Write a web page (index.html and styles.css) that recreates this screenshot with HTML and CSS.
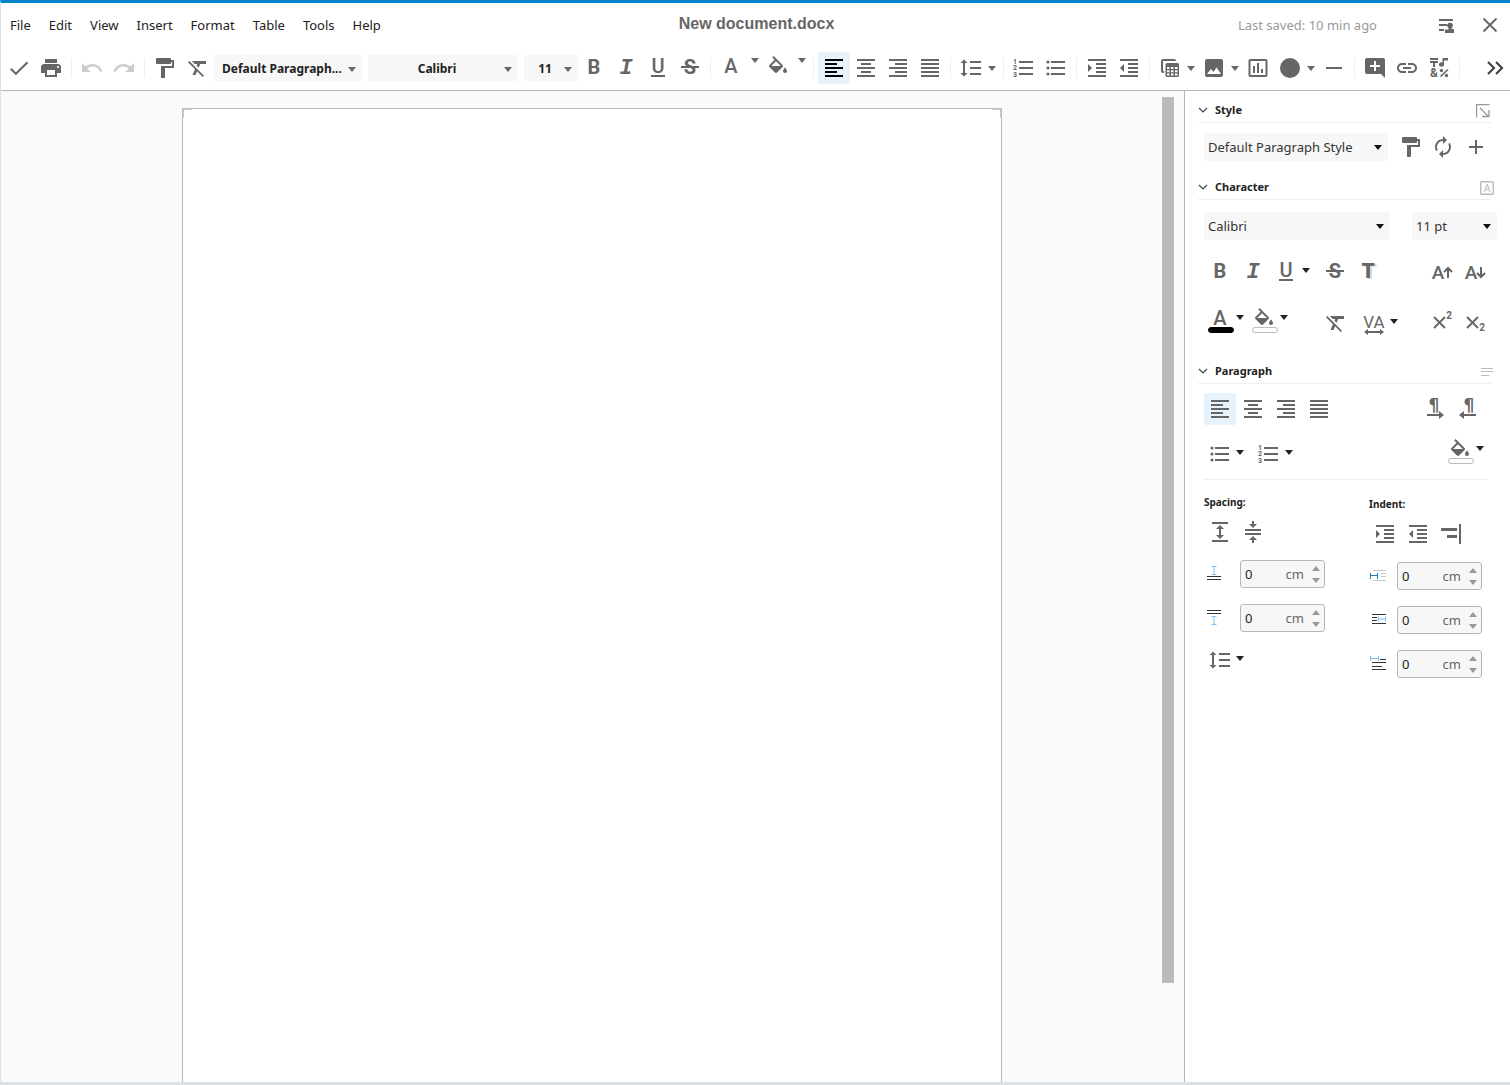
FILE: index.html
```html
<!DOCTYPE html>
<html lang="en">
<head>
    <meta charset="UTF-8">
    <meta name="viewport" content="width=device-width, initial-scale=1.0">
    <title>New document.docx</title>
    <link rel="stylesheet" href="styles.css">
</head>
<body>
    <!-- Icon sprite -->
    <svg class="sprite" aria-hidden="true">
        <symbol id="i-check" viewBox="0 0 24 24"><path d="M3.7 12.8l5.2 5L20.500 6.300" fill="none" stroke="currentColor" stroke-width="2"/></symbol>
        <symbol id="i-print" viewBox="0 0 24 24"><path d="M19 8H5c-1.66 0-3 1.34-3 3v6h4v4h12v-4h4v-6c0-1.66-1.34-3-3-3zm-3 11H8v-5h8v5zm3-7c-.55 0-1-.45-1-1s.45-1 1-1 1 .45 1 1-.45 1-1 1zm-1-9H6v4h12V3z"/></symbol>
        <symbol id="i-undo" viewBox="0 0 24 24"><path d="M12.500 8c-2.650 0-5.050.990-6.900 2.600L2 7v9h9l-3.620-3.620c1.390-1.160 3.160-1.880 5.120-1.880 3.540 0 6.550 2.310 7.600 5.500l2.370-.780C21.080 11.030 17.150 8 12.500 8z"/></symbol>
        <symbol id="i-redo" viewBox="0 0 24 24"><path d="M18.400 10.600C16.550 8.990 14.150 8 11.500 8c-4.650 0-8.580 3.030-9.960 7.220L3.900 16c1.050-3.190 4.050-5.500 7.600-5.500 1.950 0 3.730.720 5.120 1.880L13 16h9V7l-3.600 3.600z"/></symbol>
        <symbol id="i-paint" viewBox="0 0 24 24"><path d="M18 4V3c0-.55-.45-1-1-1H4c-.55 0-1 .45-1 1v4c0 .55.45 1 1 1h13c.55 0 1-.45 1-1V6h1v4H8v11c0 .55.45 1 1 1h2c.55 0 1-.45 1-1v-9h9V4h-3z"/></symbol>
        <symbol id="i-clear" viewBox="0 0 24 24"><path d="M4.270 5L3 6.270l6.970 6.970L7.500 19h3l1.570-3.660L17.730 21 19 19.730 4.550 5.270 4.270 5zM7 5v.180L9.820 8h2.400l-.720 1.680 2.100 2.100L15.210 8H21V5H7z"/></symbol>
        <symbol id="i-fill" viewBox="0 0 24 24"><path d="M16.560 8.940L7.620 0 6.210 1.410l2.380 2.380-5.150 5.150c-.590.590-.590 1.540 0 2.120l5.500 5.500c.290.290.680.440 1.060.440s.770-.150 1.060-.440l5.500-5.500c.590-.580.590-1.530 0-2.120zM5.210 10L10 5.210 14.790 10H5.210zM19 11.500s-2 2.170-2 3.500c0 1.100.900 2 2 2s2-.900 2-2c0-1.330-2-3.500-2-3.500z"/></symbol>
        <symbol id="i-left" viewBox="0 0 24 24"><path d="M3 3h18v2H3zM3 7h12v2H3zM3 11h18v2H3zM3 15h12v2H3zM3 19h18v2H3z"/></symbol>
        <symbol id="i-center" viewBox="0 0 24 24"><path d="M3 3h18v2H3zM7 7h10v2H7zM3 11h18v2H3zM7 15h10v2H7zM3 19h18v2H3z"/></symbol>
        <symbol id="i-right" viewBox="0 0 24 24"><path d="M3 3h18v2H3zM9 7h12v2H9zM3 11h18v2H3zM9 15h12v2H9zM3 19h18v2H3z"/></symbol>
        <symbol id="i-justify" viewBox="0 0 24 24"><path d="M3 3h18v2H3zM3 7h18v2H3zM3 11h18v2H3zM3 15h18v2H3zM3 19h18v2H3z"/></symbol>
        <symbol id="i-lines" viewBox="0 0 24 24"><path d="M6 7h2.500L5 3.500 1.500 7H4v10H1.500L5 20.500 8.500 17H6V7zm5-2v2h11V5H11zm0 14h11v-2H11v2zm0-6h11v-2H11v2z"/></symbol>
        <symbol id="i-ul" viewBox="0 0 24 24"><path d="M7 5h14v2H7zM7 11h14v2H7zM7 17h14v2H7z"/><circle cx="4" cy="6" r="1.600"/><circle cx="4" cy="12" r="1.600"/><circle cx="4" cy="18" r="1.600"/></symbol>
        <symbol id="i-indent" viewBox="0 0 24 24"><path d="M3 21h18v-2H3v2zM3 8v8l4-4-4-4zm8 9h10v-2H11v2zM3 3v2h18V3H3zm8 6h10V7H11v2zm0 4h10v-2H11v2z"/></symbol>
        <symbol id="i-outdent" viewBox="0 0 24 24"><path d="M11 17h10v-2H11v2zm-8-5l4 4V8l-4 4zm0 9h18v-2H3v2zM3 3v2h18V3H3zm8 6h10V7H11v2zm0 4h10v-2H11v2z"/></symbol>
        <symbol id="i-table" viewBox="0 0 24 24"><path d="M17 5V4.500Q17 4 16 4H5Q4 4 4 5v10q0 1 1 1h1" fill="none" stroke="currentColor" stroke-width="2"/><path fill-rule="evenodd" d="M9 7h10.500a1.500 1.500 0 0 1 1.500 1.500v11a1.500 1.500 0 0 1-1.500 1.500H9a1.500 1.500 0 0 1-1.500-1.500v-11A1.500 1.500 0 0 1 9 7zM9 11v2h2.500v-2zm4 0v2h2.500v-2zm4 0v2h2.500v-2zM9 14.200v2h2.500v-2zm4 0v2h2.500v-2zm4 0v2h2.500v-2zM9 17.500v2h2.500v-2zm4 0v2h2.500v-2zm4 0v2h2.500v-2z"/></symbol>
        <symbol id="i-image" viewBox="0 0 24 24"><path fill-rule="evenodd" d="M5 3h14a2 2 0 0 1 2 2v14a2 2 0 0 1-2 2H5a2 2 0 0 1-2-2V5a2 2 0 0 1 2-2zM5 18h14l-4.500-6.500-3 4.500-2.500-3z"/></symbol>
        <symbol id="i-chart" viewBox="0 0 24 24"><path d="M9 17H7v-7h2v7zm4 0h-2V7h2v10zm4 0h-2v-4h2v4zm2.500 2.100h-15V5h15v14.100zm0-16.100h-15c-1.100 0-2 .900-2 2v14c0 1.100.900 2 2 2h15c1.100 0 2-.900 2-2V5c0-1.100-.900-2-2-2z"/></symbol>
        <symbol id="i-circle" viewBox="0 0 24 24"><circle cx="12" cy="12" r="10"/></symbol>
        <symbol id="i-line" viewBox="0 0 24 24"><path d="M4 11h16v2H4z"/></symbol>
        <symbol id="i-comment" viewBox="0 0 24 24"><path d="M22 4c0-1.100-.900-2-2-2H4c-1.100 0-2 .900-2 2v12c0 1.100.900 2 2 2h14l4 4V4zm-5 7h-4v4h-2v-4H7V9h4V5h2v4h4v2z"/></symbol>
        <symbol id="i-link" viewBox="0 0 24 24"><path d="M3.900 12c0-1.710 1.390-3.100 3.100-3.100h4V7H7c-2.760 0-5 2.240-5 5s2.240 5 5 5h4v-1.900H7c-1.710 0-3.100-1.390-3.100-3.100zM8 13h8v-2H8v2zm9-6h-4v1.900h4c1.710 0 3.100 1.390 3.100 3.100s-1.390 3.100-3.100 3.100h-4V17h4c2.760 0 5-2.240 5-5s-2.240-5-5-5z"/></symbol>
        <symbol id="i-more" viewBox="0 0 24 24"><path d="M6 6l6 6-6 6M14 6l6 6-6 6" fill="none" stroke="currentColor" stroke-width="2.200"/></symbol>
        <symbol id="i-close" viewBox="0 0 24 24"><path d="M5.500 5.500l13 13M18.500 5.500l-13 13" stroke="currentColor" stroke-width="1.800"/></symbol>
        <symbol id="i-view" viewBox="0 0 24 24"><path d="M5 6h14v2H5zM5 11h8v2H5zM5 16h5v2H5z"/><circle cx="16" cy="12.500" r="2.800"/><path d="M14.500 13h3v3h2.500v4h-9v-3.500h3.500z"/></symbol>
        <symbol id="i-caret" viewBox="0 0 8 5"><path d="M0 0h8L4 5z"/></symbol>
        <symbol id="i-chevron" viewBox="0 0 10 6"><path d="M1 1l4 4 4-4" fill="none" stroke="currentColor" stroke-width="1.200"/></symbol>
        <symbol id="i-dialog" viewBox="0 0 14 14"><path d="M.500 13.500V.500h13M4 4l8 8M6 12.500h7V6" fill="none" stroke="currentColor" stroke-width="1.300"/></symbol>
        <symbol id="i-para" viewBox="0 0 14 14"><path d="M1 3h12v1H1zM1 6h12v1H1zM1 10h8v1H1z"/></symbol>
        <symbol id="i-sync" viewBox="0 0 24 24"><path d="M12 6v3l4-4-4-4v3c-4.420 0-8 3.580-8 8 0 1.570.460 3.030 1.240 4.260L6.700 14.800c-.450-.830-.700-1.790-.700-2.800 0-3.310 2.690-6 6-6zm6.760 1.740L17.300 9.200c.440.840.700 1.790.700 2.800 0 3.310-2.690 6-6 6v-3l-4 4 4 4v-3c4.420 0 8-3.580 8-8 0-1.570-.460-3.030-1.240-4.260z"/></symbol>
        <symbol id="i-plus" viewBox="0 0 24 24"><path d="M12 5h2v6h6v2h-6v6h-2v-6H6v-2h6z"/></symbol>
        <symbol id="i-increase" viewBox="0 0 24 24"><path d="M4 2h16v2H4zM4 20h16v2H4zM11 8h2v8h-2z"/><path d="M12 5l4 4H8zM12 19l-4-4h8z"/></symbol>
        <symbol id="i-decrease" viewBox="0 0 24 24"><path d="M4 9h16v2H4zM4 13h16v2H4zM11 1h2v3h-2zM11 20h2v3h-2z"/><path d="M12 8L8 4h8zM12 16l4 4H8z"/></symbol>
        <symbol id="i-hanging" viewBox="0 0 24 24"><path d="M2 6h16v3H2zM8 13h10v3H8zM20 2h2v20h-2z"/></symbol>
        <symbol id="i-above" viewBox="0 0 16 16"><path class="ink" d="M1 10.500h14M1 13.500h14"/><path class="blue" d="M5.500 .500h5M5.500 8.500h5M8 1v8"/></symbol>
        <symbol id="i-below" viewBox="0 0 16 16"><path class="ink" d="M1 .500h14M1 3.500h14"/><path class="blue" d="M5.500 6.500h5M5.500 14.500h5M8 7v8"/></symbol>
        <symbol id="i-before" viewBox="0 0 16 16"><path class="pale" d="M3 2.500h13M11 5.500h5M11 8.500h5M3 12.500h13"/><path class="deep" d="M.500 5v6M7.500 5v6M.500 7.500h7"/></symbol>
        <symbol id="i-after" viewBox="0 0 16 16"><path class="ink" d="M2 2.500h14M2 5.500h5M2 8.500h5M2 11.500h14"/><path class="blue" d="M8.500 4.500v5M15.500 4.500v5M8 7h8"/></symbol>
        <symbol id="i-first" viewBox="0 0 16 16"><path class="ink" d="M10 3.500h6M2 6.500h14M2 10.500h10M2 13.500h14"/><path class="blue" d="M.500 0v5M8.500 0v5M.500 2.500H8"/></symbol>
    </svg>

    <header class="top">
        <div class="menubar">
            <nav class="menu">
                <a href="#">File</a>
                <a href="#">Edit</a>
                <a href="#">View</a>
                <a href="#">Insert</a>
                <a href="#">Format</a>
                <a href="#">Table</a>
                <a href="#">Tools</a>
                <a href="#">Help</a>
            </nav>
            <h1 class="title">New document.docx</h1>
            <div class="status">
                <span class="saved">Last saved: 10 min ago</span>
                <button class="btn" aria-label="Toggle sidebar"><svg><use href="#i-view"/></svg></button>
                <button class="btn" aria-label="Close"><svg><use href="#i-close"/></svg></button>
            </div>
        </div>

        <div class="toolbar">
            <button class="btn" aria-label="Save"><svg><use href="#i-check"/></svg></button>
            <button class="btn" aria-label="Print"><svg><use href="#i-print"/></svg></button>
            <span class="sep"></span>
            <button class="btn" aria-label="Undo" disabled><svg><use href="#i-undo"/></svg></button>
            <button class="btn" aria-label="Redo" disabled><svg><use href="#i-redo"/></svg></button>
            <span class="sep"></span>
            <button class="btn" aria-label="Clone formatting"><svg><use href="#i-paint"/></svg></button>
            <button class="btn" aria-label="Clear formatting"><svg><use href="#i-clear"/></svg></button>
            <div class="combos">
                <div class="combo combo-style"><select aria-label="Paragraph style"><option>Default Paragraph...</option></select></div>
                <div class="combo combo-font"><select aria-label="Font name"><option>Calibri</option></select></div>
                <div class="combo combo-size"><select aria-label="Font size"><option>11</option></select></div>
            </div>
            <button class="btn" aria-label="Bold"><svg viewBox="0 0 24 24"><text x="12" y="18" class="g-bold">B</text></svg></button>
            <button class="btn" aria-label="Italic"><svg viewBox="0 0 24 24"><text x="12" y="18" class="g-italic">I</text></svg></button>
            <button class="btn" aria-label="Underline"><svg viewBox="0 0 24 24"><text x="12" y="17" class="g-medium">U</text><path d="M5 19h14v2H5z"/></svg></button>
            <button class="btn" aria-label="Strikethrough"><svg viewBox="0 0 24 24"><text x="12" y="18" class="g-bold">S</text><path d="M3 10h18v2H3z"/></svg></button>
            <span class="sep"></span>
            <button class="btn" aria-label="Font color"><svg viewBox="0 0 24 24"><text x="12" y="17" class="g-medium">A</text></svg></button>
            <button class="drop drop-high" aria-label="Font color options"><svg><use href="#i-caret"/></svg></button>
            <button class="btn" aria-label="Highlighting"><svg><use href="#i-fill"/></svg></button>
            <button class="drop drop-high" aria-label="Highlighting options"><svg><use href="#i-caret"/></svg></button>
            <span class="sep"></span>
            <button class="btn active" aria-label="Align left"><svg><use href="#i-left"/></svg></button>
            <button class="btn" aria-label="Align center"><svg><use href="#i-center"/></svg></button>
            <button class="btn" aria-label="Align right"><svg><use href="#i-right"/></svg></button>
            <button class="btn" aria-label="Justified"><svg><use href="#i-justify"/></svg></button>
            <span class="sep"></span>
            <button class="btn" aria-label="Line spacing"><svg><use href="#i-lines"/></svg></button>
            <button class="drop" aria-label="Line spacing options"><svg><use href="#i-caret"/></svg></button>
            <span class="sep"></span>
            <button class="btn" aria-label="Numbered list"><svg viewBox="0 0 24 24"><path d="M7 5h14v2H7zM7 11h14v2H7zM7 17h14v2H7z"/><text x="3" y="8" class="g-num">1</text><text x="3" y="14" class="g-num">2</text><text x="3" y="21" class="g-num">3</text></svg></button>
            <button class="btn" aria-label="Bulleted list"><svg><use href="#i-ul"/></svg></button>
            <span class="sep"></span>
            <button class="btn" aria-label="Increase indent"><svg><use href="#i-indent"/></svg></button>
            <button class="btn" aria-label="Decrease indent"><svg><use href="#i-outdent"/></svg></button>
            <span class="sep"></span>
            <button class="btn" aria-label="Insert table"><svg><use href="#i-table"/></svg></button>
            <button class="drop" aria-label="Table options"><svg><use href="#i-caret"/></svg></button>
            <button class="btn" aria-label="Insert image"><svg><use href="#i-image"/></svg></button>
            <button class="drop" aria-label="Image options"><svg><use href="#i-caret"/></svg></button>
            <button class="btn" aria-label="Insert chart"><svg><use href="#i-chart"/></svg></button>
            <button class="btn" aria-label="Insert shape"><svg><use href="#i-circle"/></svg></button>
            <button class="drop" aria-label="Shape options"><svg><use href="#i-caret"/></svg></button>
            <button class="btn" aria-label="Insert line"><svg><use href="#i-line"/></svg></button>
            <span class="sep"></span>
            <button class="btn" aria-label="Insert comment"><svg><use href="#i-comment"/></svg></button>
            <button class="btn" aria-label="Insert link"><svg><use href="#i-link"/></svg></button>
            <button class="btn" aria-label="Special character"><svg viewBox="0 0 24 24"><path d="M3 2h8v2H3zM3 5h8v2H8v4H6V7H3z"/><ellipse cx="14.5" cy="8.5" rx="2.6" ry="2.2"/><path d="M15.5 2H21v2.500h-4v4h-1.500z"/><text x="7" y="21" class="g-amp">&amp;</text><path d="M13.5 20.500l7.500-7" stroke="currentColor" stroke-width="1.7"/><circle cx="14.5" cy="14.5" r="1.7"/><circle cx="19.5" cy="19.5" r="1.7"/></svg></button>
            <span class="sep"></span>
            <button class="btn more" aria-label="More tools"><svg><use href="#i-more"/></svg></button>
        </div>
    </header>

    <div class="workspace">
        <main class="canvas">
            <div class="page"></div>
            <div class="scrollbar"></div>
        </main>

        <aside class="sidebar">
            <section class="panel">
                <header class="panel-head">
                    <svg class="chevron"><use href="#i-chevron"/></svg>
                    <h2>Style</h2>
                    <button class="head-btn dialog-btn" aria-label="Style options"><svg><use href="#i-dialog"/></svg></button>
                </header>
                <div class="row row-style">
                    <div class="field field-wide"><select aria-label="Paragraph style"><option>Default Paragraph Style</option></select></div>
                    <button class="btn" aria-label="Clone formatting"><svg><use href="#i-paint"/></svg></button>
                    <button class="btn" aria-label="Update style"><svg><use href="#i-sync"/></svg></button>
                    <button class="btn" aria-label="New style"><svg><use href="#i-plus"/></svg></button>
                </div>
            </section>

            <section class="panel">
                <header class="panel-head">
                    <svg class="chevron"><use href="#i-chevron"/></svg>
                    <h2>Character</h2>
                    <button class="head-btn" aria-label="Character options"><svg viewBox="0 0 14 14"><rect x=".7" y=".7" width="12.6" height="12.6" rx="1" fill="none" stroke="currentColor" stroke-width="1.4"/><text x="7" y="11" class="g-small">A</text></svg></button>
                </header>
                <div class="row row-fonts">
                    <div class="field field-wide"><select aria-label="Font name"><option>Calibri</option></select></div>
                    <div class="field field-size"><select aria-label="Font size"><option>11 pt</option></select></div>
                </div>
                <div class="row row-char">
                    <div class="group group-left">
                        <button class="btn" aria-label="Bold"><svg viewBox="0 0 24 24"><text x="12" y="18" class="g-bold">B</text></svg></button>
                        <button class="btn" aria-label="Italic"><svg viewBox="0 0 24 24"><text x="12" y="18" class="g-italic">I</text></svg></button>
                        <div class="split">
                            <button class="btn" aria-label="Underline"><svg viewBox="0 0 24 24"><text x="12" y="17" class="g-medium">U</text><path d="M5 19h14v2H5z"/></svg></button>
                            <button class="drop" aria-label="Underline options"><svg><use href="#i-caret"/></svg></button>
                        </div>
                    </div>
                    <div class="group">
                        <button class="btn" aria-label="Strikethrough"><svg viewBox="0 0 24 24"><text x="12" y="18" class="g-bold">S</text><path d="M3 10h18v2H3z"/></svg></button>
                        <button class="btn" aria-label="Shadow"><svg viewBox="0 0 24 24"><text x="12" y="18" class="g-shadow">T</text></svg></button>
                    </div>
                    <div class="group group-end">
                        <button class="btn" aria-label="Increase size"><svg viewBox="0 0 24 24"><text x="8" y="19" class="g-size">A</text><path d="M18 18V8M14 12l4-4 4 4" fill="none" stroke="currentColor" stroke-width="2"/></svg></button>
                        <button class="btn" aria-label="Decrease size"><svg viewBox="0 0 24 24"><text x="8" y="19" class="g-size">A</text><path d="M18 7v10M14 13l4 4 4-4" fill="none" stroke="currentColor" stroke-width="2"/></svg></button>
                    </div>
                </div>
                <div class="row row-color">
                    <div class="group group-left group-color">
                        <div class="split split-high">
                            <button class="btn swatch swatch-black" aria-label="Font color"><svg viewBox="0 0 24 24"><text x="12" y="17" class="g-medium">A</text></svg></button>
                            <button class="drop" aria-label="Font color options"><svg><use href="#i-caret"/></svg></button>
                        </div>
                        <div class="split split-high">
                            <button class="btn swatch" aria-label="Highlighting"><svg><use href="#i-fill"/></svg></button>
                            <button class="drop" aria-label="Highlighting options"><svg><use href="#i-caret"/></svg></button>
                        </div>
                    </div>
                    <div class="group group-wide">
                        <button class="btn" aria-label="Clear formatting"><svg><use href="#i-clear"/></svg></button>
                        <div class="split">
                            <button class="btn" aria-label="Character spacing"><svg viewBox="0 0 24 24"><text x="12" y="17" class="g-kern">VA</text><path d="M5 20h14v2H5z"/><path d="M2 21l4-3v6zM22 21l-4-3v6z"/></svg></button>
                            <button class="drop" aria-label="Character spacing options"><svg><use href="#i-caret"/></svg></button>
                        </div>
                    </div>
                    <div class="group group-end">
                        <button class="btn" aria-label="Superscript"><svg viewBox="0 0 24 24"><path d="M4 6l11 11M15 6L4 17" stroke="currentColor" stroke-width="1.9"/><text x="19" y="8" class="g-exp">2</text></svg></button>
                        <button class="btn" aria-label="Subscript"><svg viewBox="0 0 24 24"><path d="M4 6l11 11M15 6L4 17" stroke="currentColor" stroke-width="1.9"/><text x="19" y="20" class="g-exp">2</text></svg></button>
                    </div>
                </div>
            </section>

            <section class="panel">
                <header class="panel-head">
                    <svg class="chevron"><use href="#i-chevron"/></svg>
                    <h2>Paragraph</h2>
                    <button class="head-btn" aria-label="Paragraph options"><svg><use href="#i-para"/></svg></button>
                </header>
                <div class="row row-align">
                    <div class="group">
                        <button class="btn active" aria-label="Align left"><svg><use href="#i-left"/></svg></button>
                        <button class="btn" aria-label="Align center"><svg><use href="#i-center"/></svg></button>
                        <button class="btn" aria-label="Align right"><svg><use href="#i-right"/></svg></button>
                        <button class="btn" aria-label="Justified"><svg><use href="#i-justify"/></svg></button>
                    </div>
                    <div class="group group-end">
                        <button class="btn" aria-label="Left to right"><svg viewBox="0 0 24 24"><text x="11" y="14" class="g-pilcrow">¶</text><path d="M4 17h12v-3l5 4-5 4v-3H4z"/></svg></button>
                        <button class="btn" aria-label="Right to left"><svg viewBox="0 0 24 24"><text x="13" y="14" class="g-pilcrow">¶</text><path d="M20 17H8v-3l-5 4 5 4v-3h12z"/></svg></button>
                    </div>
                </div>
                <div class="row row-list">
                    <div class="group group-list">
                        <div class="split">
                            <button class="btn" aria-label="Bulleted list"><svg><use href="#i-ul"/></svg></button>
                            <button class="drop" aria-label="Bullet options"><svg><use href="#i-caret"/></svg></button>
                        </div>
                        <div class="split">
                            <button class="btn" aria-label="Numbered list"><svg viewBox="0 0 24 24"><path d="M7 5h14v2H7zM7 11h14v2H7zM7 17h14v2H7z"/><text x="3" y="8" class="g-num">1</text><text x="3" y="14" class="g-num">2</text><text x="3" y="21" class="g-num">3</text></svg></button>
                            <button class="drop" aria-label="Numbering options"><svg><use href="#i-caret"/></svg></button>
                        </div>
                    </div>
                    <div class="split split-high group-end">
                        <button class="btn swatch" aria-label="Background color"><svg><use href="#i-fill"/></svg></button>
                        <button class="drop" aria-label="Background color options"><svg><use href="#i-caret"/></svg></button>
                    </div>
                </div>

                <div class="columns">
                    <div class="column">
                        <h3>Spacing:</h3>
                        <div class="group">
                            <button class="btn" aria-label="Increase spacing"><svg><use href="#i-increase"/></svg></button>
                            <button class="btn" aria-label="Decrease spacing"><svg><use href="#i-decrease"/></svg></button>
                        </div>
                        <div class="measure">
                            <label for="above" aria-label="Above paragraph"><svg><use href="#i-above"/></svg></label>
                            <div class="spin"><input type="text" id="above" value="0"><span>cm</span><div class="arrows"><button aria-label="Up"><svg><use href="#i-caret"/></svg></button><button aria-label="Down"><svg><use href="#i-caret"/></svg></button></div></div>
                        </div>
                        <div class="measure">
                            <label for="below" aria-label="Below paragraph"><svg><use href="#i-below"/></svg></label>
                            <div class="spin"><input type="text" id="below" value="0"><span>cm</span><div class="arrows"><button aria-label="Up"><svg><use href="#i-caret"/></svg></button><button aria-label="Down"><svg><use href="#i-caret"/></svg></button></div></div>
                        </div>
                        <div class="split line-spacing">
                            <button class="btn" aria-label="Line spacing"><svg><use href="#i-lines"/></svg></button>
                            <button class="drop" aria-label="Line spacing options"><svg><use href="#i-caret"/></svg></button>
                        </div>
                    </div>
                    <div class="column column-indent">
                        <h3>Indent:</h3>
                        <div class="group">
                            <button class="btn" aria-label="Increase indent"><svg><use href="#i-indent"/></svg></button>
                            <button class="btn" aria-label="Decrease indent"><svg><use href="#i-outdent"/></svg></button>
                            <button class="btn" aria-label="Hanging indent"><svg><use href="#i-hanging"/></svg></button>
                        </div>
                        <div class="measure">
                            <label for="before" aria-label="Before text"><svg><use href="#i-before"/></svg></label>
                            <div class="spin"><input type="text" id="before" value="0"><span>cm</span><div class="arrows"><button aria-label="Up"><svg><use href="#i-caret"/></svg></button><button aria-label="Down"><svg><use href="#i-caret"/></svg></button></div></div>
                        </div>
                        <div class="measure">
                            <label for="after" aria-label="After text"><svg><use href="#i-after"/></svg></label>
                            <div class="spin"><input type="text" id="after" value="0"><span>cm</span><div class="arrows"><button aria-label="Up"><svg><use href="#i-caret"/></svg></button><button aria-label="Down"><svg><use href="#i-caret"/></svg></button></div></div>
                        </div>
                        <div class="measure">
                            <label for="first" aria-label="First line"><svg><use href="#i-first"/></svg></label>
                            <div class="spin"><input type="text" id="first" value="0"><span>cm</span><div class="arrows"><button aria-label="Up"><svg><use href="#i-caret"/></svg></button><button aria-label="Down"><svg><use href="#i-caret"/></svg></button></div></div>
                        </div>
                    </div>
                </div>
            </section>
        </aside>
    </div>
</body>
</html>
```
FILE: styles.css
```css
*,
*::before,
*::after {
    box-sizing: border-box;
}

body {
    display: flex;
    flex-direction: column;
    min-height: 100vh;
    margin: 0;
    border-top: 3px solid #0082c9;
    border-bottom: 3px solid #dde1e6;
    border-left: 1px solid #dde1e6;
    background-color: #fff;
    color: #222;
    font-family: "Noto Sans", sans-serif;
    font-size: 13px;
}

.sprite {
    display: none;
}

button,
select,
input {
    margin: 0;
    padding: 0;
    border: none;
    background: none;
    color: inherit;
    font: inherit;
}

h1,
h2,
h3 {
    margin: 0;
}

svg {
    display: block;
    fill: currentColor;
    overflow: visible;
}

/* Letters inside icons */
svg text {
    font-family: Roboto, sans-serif;
    text-anchor: middle;
}

.g-bold {
    font-size: 20px;
    font-weight: 700;
}

svg .g-italic {
    font-family: "Liberation Mono", monospace;
    font-size: 22px;
    font-style: italic;
    font-weight: 700;
}

.g-medium {
    font-size: 20px;
    font-weight: 500;
}

.g-shadow {
    font-size: 21px;
    font-weight: 900;
    text-shadow: 2px 1px 0 #ddd;
}

.g-size {
    font-size: 19px;
    font-weight: 500;
}

.g-kern {
    font-size: 17px;
}

.g-exp {
    font-size: 10px;
    font-weight: 700;
}

.g-num {
    font-size: 7px;
    font-weight: 700;
}

.g-amp {
    font-size: 12px;
    font-weight: 700;
}

.g-small {
    font-size: 11px;
}

svg .g-pilcrow {
    font-family: "DejaVu Sans", sans-serif;
    font-size: 17px;
    font-weight: 700;
}

.ink,
.blue,
.pale,
.deep {
    fill: none;
    stroke: #333;
}

.blue {
    stroke: #83beec;
}

.pale {
    stroke: #c8c8c8;
}

.deep {
    stroke: #1e7fb8;
}

/* Buttons */
.btn {
    display: flex;
    flex: none;
    align-items: center;
    justify-content: center;
    width: 32px;
    height: 32px;
    border-radius: 2px;
    color: #666;
}

.btn svg {
    width: 24px;
    height: 24px;
}

.btn:disabled {
    color: #ccc;
}

.btn.active {
    background-color: #e8f2fa;
}

.drop {
    display: flex;
    flex: none;
    align-items: center;
    justify-content: center;
    width: 12px;
    height: 32px;
    padding-right: 2px;
    color: #666;
}

.drop svg {
    width: 8px;
    height: 5px;
}

.drop-high {
    width: 15px;
    padding: 0 0 16px;
}

/* Header */
.top {
    border-bottom: 1px solid #b6b6b6;
}

.menubar {
    display: grid;
    grid-template-columns: 1fr auto 1fr;
    align-items: center;
    height: 43px;
    padding: 0 4px 0 9px;
}

.menu {
    display: flex;
    gap: 18px;
}

.menu a {
    color: #222;
    text-decoration: none;
}

.title {
    padding: 0 3px 2px 0;
    color: #666;
    font-family: "Liberation Sans", sans-serif;
    font-size: 16px;
    font-weight: 700;
}

.status {
    display: flex;
    align-items: center;
    justify-content: flex-end;
    gap: 12px;
}

.saved {
    margin-right: 41px;
    color: #999;
}

.toolbar {
    display: flex;
    align-items: center;
    height: 44px;
    padding-left: 2px;
}

.toolbar .active {
    color: #000;
}

.sep {
    flex: none;
    width: 1px;
    height: 20px;
    margin: 0 4px;
    background-color: #eee;
}

.more {
    margin-left: auto;
    color: #444;
}

.combos {
    display: flex;
    gap: 6px;
    margin-left: 1px;
}

.combo,
.field {
    position: relative;
}

.combo select,
.field select {
    display: block;
    width: 100%;
    border-radius: 2px;
    background-color: #f7f7f7;
    appearance: none;
}

.combo select {
    height: 26px;
    padding: 0 18px 0 8px;
    font-size: 12px;
    font-weight: 700;
}

.combo::after,
.field::after {
    content: "";
    position: absolute;
    top: 12px;
    right: 6px;
    border: 4px solid transparent;
    border-top: 5px solid #666;
    border-bottom: none;
    pointer-events: none;
}

.combo-style {
    width: 148px;
}

.combo-font {
    width: 150px;
}

.combo-size {
    width: 54px;
}

.combo-font select,
.combo-size select {
    padding: 0 16px 0 4px;
    text-align-last: center;
}

/* Document area */
.workspace {
    display: flex;
    flex: 1;
}

.canvas {
    display: flex;
    flex: 1;
    position: relative;
    justify-content: center;
    padding: 17px 2px 0 0;
    background-color: #f8fafc;
}

.page {
    position: relative;
    width: 820px;
    border: 1px solid #bbb;
    border-bottom: none;
    background-color: #fff;
}

.page::before,
.page::after {
    content: "";
    position: absolute;
    top: 0;
    width: 9px;
    height: 9px;
    border-top: 1px solid #ccc;
}

.page::before {
    left: 0;
    border-left: 1px solid #ccc;
}

.page::after {
    right: 0;
    border-right: 1px solid #ccc;
}

.scrollbar {
    position: absolute;
    top: 6px;
    right: 10px;
    bottom: 99px;
    width: 12px;
    background-color: #bababa;
}

/* Sidebar */
.sidebar {
    flex: none;
    width: 326px;
    padding-top: 6px;
    border-left: 1px solid #b6b6b6;
}

.sidebar .drop {
    width: 8px;
    padding-right: 0;
    color: #222;
}

.panel-head {
    display: flex;
    align-items: center;
    height: 26px;
    margin: 0 19px 0 13px;
    border-bottom: 1px solid #eee;
}

.chevron {
    width: 10px;
    height: 6px;
    color: #444;
}

.panel-head h2 {
    margin-left: 7px;
    font-size: 11px;
}

.head-btn {
    margin: 2px -3px 0 auto;
    color: #bbb;
}

.head-btn svg {
    width: 14px;
    height: 14px;
}

.dialog-btn {
    margin-right: 1px;
    color: #999;
}

.row {
    display: flex;
    align-items: center;
    padding: 0 19px;
}

.group {
    display: flex;
    gap: 1px;
}

.split {
    display: flex;
}

.split .drop {
    padding-bottom: 4px;
}

.split-high .drop {
    padding-bottom: 8px;
}

.group-left {
    width: 115px;
}

.group-color {
    gap: 4px;
}

.group-wide {
    gap: 7px;
}

.group-list {
    gap: 9px;
}

.group-end {
    margin-left: auto;
}

.row-style {
    margin: 8px 0 11px;
}

.row-style .field {
    margin-right: 7px;
}

.row-fonts {
    gap: 22px;
    margin: 12px 0 16px;
    padding-right: 13px;
}

.row-color {
    align-items: flex-start;
    margin: 17px 0 19px;
}

.row-color .group-wide,
.row-color .group-end {
    padding-top: 2px;
}

.row-align {
    margin: 9px 0 13px;
    padding-right: 26px;
}

.row-list {
    padding-right: 26px;
}

.row-list .group-end {
    margin-top: -4px;
}

.field select {
    height: 28px;
    padding: 0 18px 0 4px;
    color: #333;
}

.field::after {
    border-top-color: #111;
}

.field-wide {
    flex: 1;
}

.field-size {
    width: 85px;
}

.swatch {
    position: relative;
}

.swatch svg {
    margin-top: -2px;
}

.swatch::after {
    content: "";
    position: absolute;
    bottom: 4px;
    left: 4px;
    width: 26px;
    height: 6px;
    border: 1px solid #bbb;
    border-radius: 3px;
    background-color: #fff;
}

.swatch-black::after {
    border-color: #000;
    background-color: #000;
}

.columns {
    display: grid;
    grid-template-columns: 165px 1fr;
    margin: 9px 22px 0 19px;
    padding-top: 14px;
    border-top: 1px solid #eee;
}

.column-indent {
    padding-top: 2px;
}

.column h3 {
    margin-bottom: 6px;
    font-size: 10px;
    line-height: 16px;
}

.column .group {
    margin-bottom: 12px;
}

.measure {
    display: flex;
    align-items: center;
    margin-bottom: 16px;
}

.measure label {
    width: 36px;
    padding-left: 2px;
}

.column-indent label {
    width: 28px;
    padding-left: 1px;
}

.measure label svg {
    width: 16px;
    height: 16px;
}

.spin {
    display: flex;
    align-items: center;
    width: 85px;
    height: 28px;
    padding: 0 4px;
    border: 1px solid #b6b6b6;
    border-radius: 3px;
    background-color: #f7f7f7;
}

.spin input {
    flex: 1;
    min-width: 0;
}

.spin span {
    color: #666;
}

.arrows {
    display: flex;
    flex-direction: column;
    gap: 7px;
    margin-left: 8px;
}

.arrows svg {
    width: 8px;
    height: 5px;
    color: #999;
}

.arrows button:first-child svg {
    transform: rotate(180deg);
}

.line-spacing {
    margin-top: -4px;
}
```
